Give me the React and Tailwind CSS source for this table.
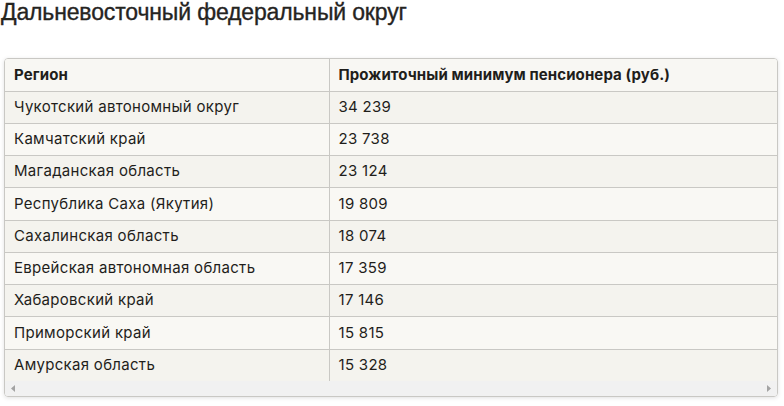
import React from "react";

const rows = [
  ["Чукотский автономный округ", "34 239"],
  ["Камчатский край", "23 738"],
  ["Магаданская область", "23 124"],
  ["Республика Саха (Якутия)", "19 809"],
  ["Сахалинская область", "18 074"],
  ["Еврейская автономная область", "17 359"],
  ["Хабаровский край", "17 146"],
  ["Приморский край", "15 815"],
  ["Амурская область", "15 328"],
];

const App = () => {
  return (
    <div className="bg-white w-[784px] h-[406px] overflow-hidden">
      <h2 className="pl-[1px] h-[58px] font-['Liberation_Sans',Arial,sans-serif] text-[#25241f] text-[23px] tracking-[-0.15px] leading-[25px] [-webkit-text-stroke:0.35px_#25241f]">
        Дальневосточный федеральный округ
      </h2>

      <div className="shadow-[0_1px_4px_rgba(0,0,0,0.12)] ml-[4px] border border-[#c9c8c4] rounded-[4px] w-[774px] overflow-hidden font-['Inter',sans-serif] text-[#1f1e1b] text-[15px] tracking-[0.3px]">
        <table className="border-collapse w-full">
          <thead>
            <tr className="bg-[#f8f7f3] border-[#c9c8c4] border-b h-[32px]">
              <th className="px-[9px] border-[#c9c8c4] border-r w-[324px] font-bold text-left tracking-[0.1px]">Регион</th>
              <th className="px-[9px] font-bold text-left tracking-[0.1px]">Прожиточный минимум пенсионера (руб.)</th>
            </tr>
          </thead>
          <tbody>
            {rows.map(([region, value], i) => (
              <tr
                key={region}
                className={`h-[32.25px] border-[#c9c8c4] ${i % 2 === 0 ? "bg-[#f4f3ee]" : "bg-[#f9f8f4]"} ${i < rows.length - 1 ? "border-b" : ""}`}
              >
                <td className="px-[9px] border-[#c9c8c4] border-r">{region}</td>
                <td className="px-[9px]">{value}</td>
              </tr>
            ))}
          </tbody>
        </table>

        {/* scrollbar */}
        <div className="flex justify-between items-center bg-[#f1f1f1] px-[6px] h-[15px]">
          <svg width="5" height="7" viewBox="0 0 5 7"><path d="M4 0L0 3.5L4 7Z" fill="#a3a3a3" /></svg>
          <svg width="5" height="7" viewBox="0 0 5 7"><path d="M1 0L5 3.5L1 7Z" fill="#a3a3a3" /></svg>
        </div>
      </div>
    </div>
  );
};

export default App;
